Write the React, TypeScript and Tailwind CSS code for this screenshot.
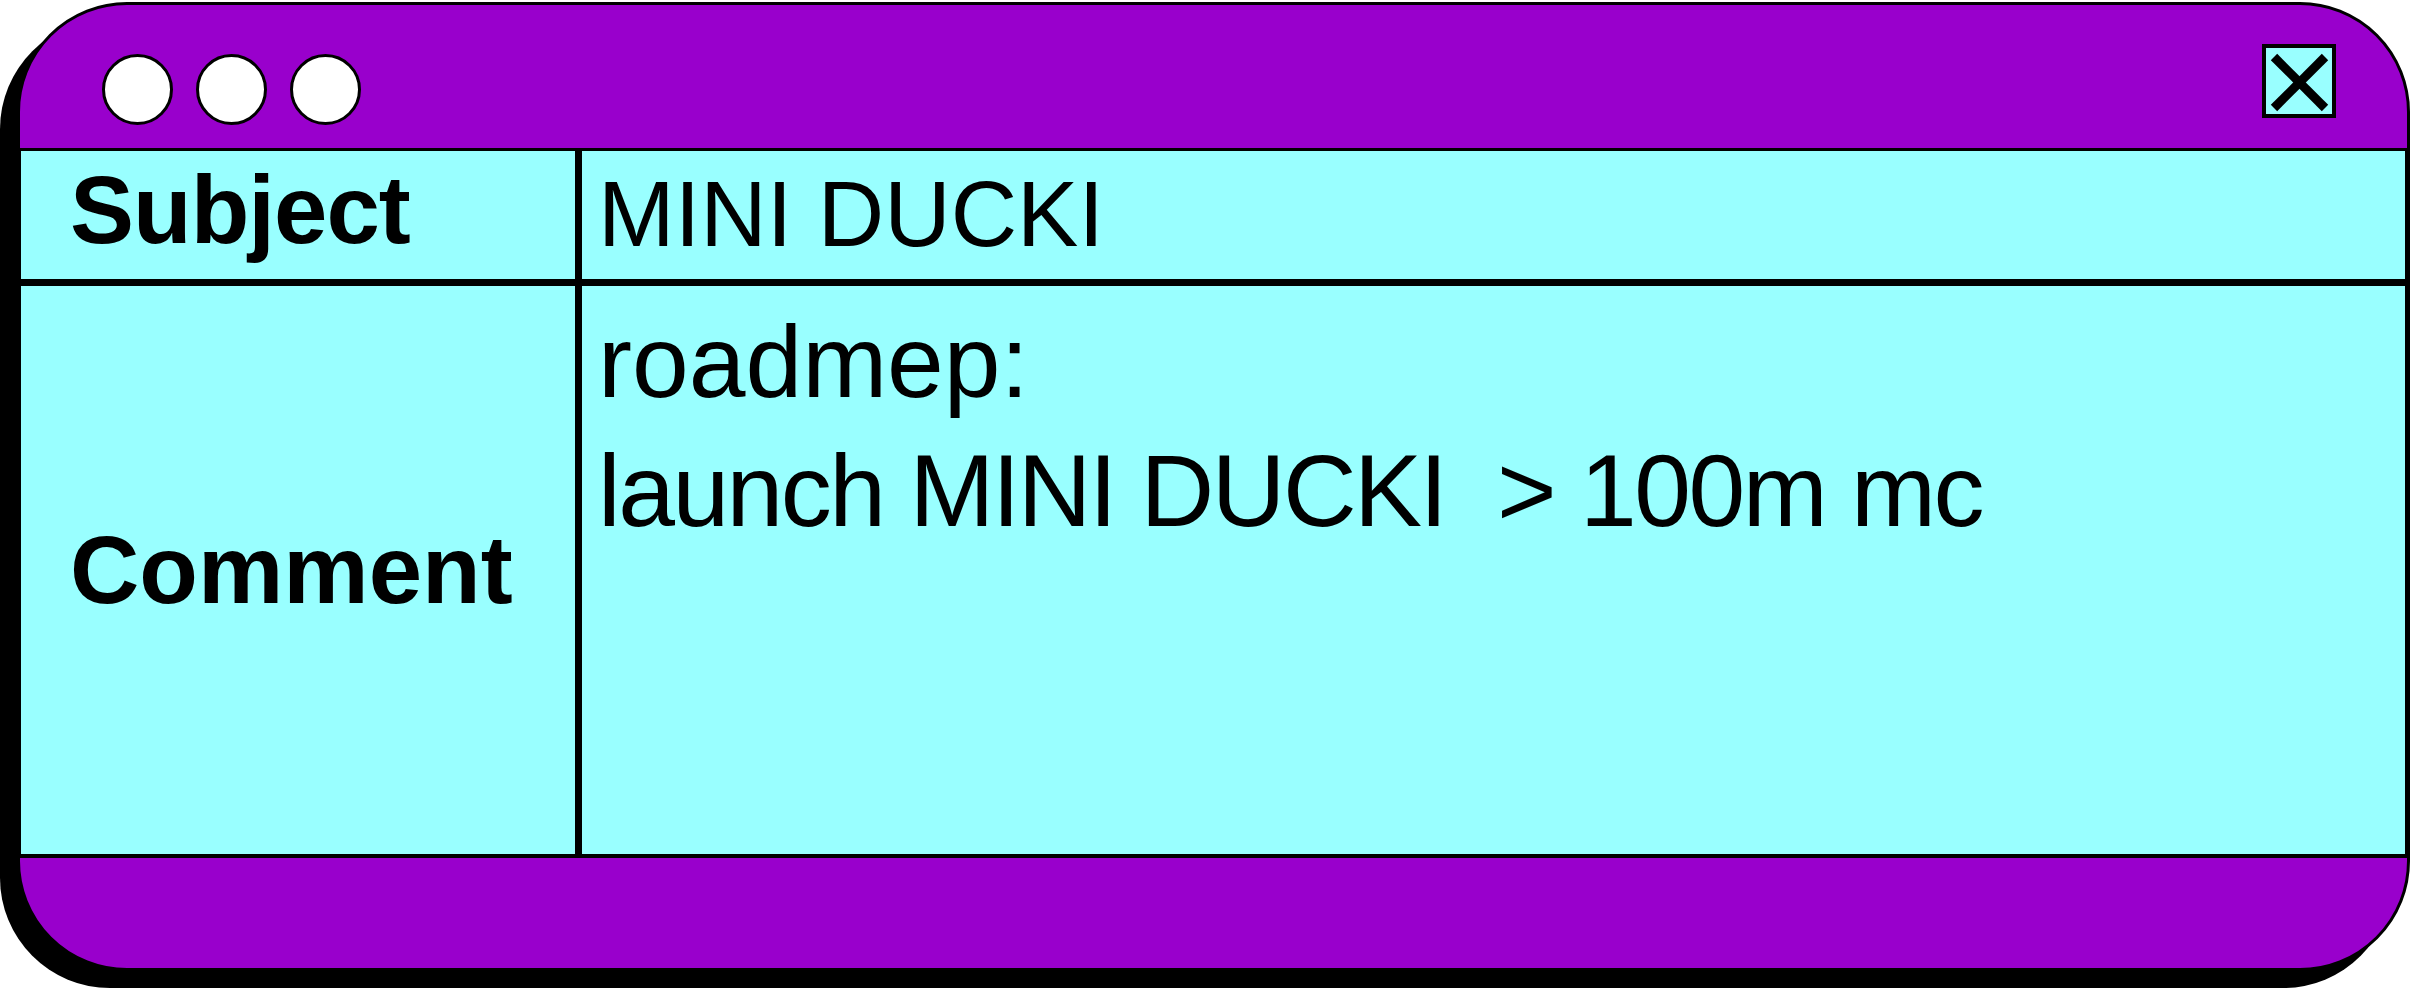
const PURPLE = 'bg-[#9900cc]';

function CloseIcon() {
  return (
    <svg width="66" height="66" viewBox="0 0 66 66" fill="none">
      <line x1="8" y1="9" x2="59" y2="60" stroke="#000" strokeWidth="9" strokeLinecap="butt" />
      <line x1="59" y1="9" x2="8" y2="60" stroke="#000" strokeWidth="9" strokeLinecap="butt" />
    </svg>
  );
}

export default function App() {
  return (
    <div className="w-[2412px] h-[988px] bg-white overflow-hidden font-['Liberation_Sans',Arial,sans-serif] text-black">
      <div
        className={`mt-[2px] ml-[17px] w-[2393px] h-[969px] rounded-[110px] border-[3px] border-black ${PURPLE} shadow-[-17px_17px_0_0_#000] overflow-hidden flex flex-col`}
      >
        {/* Title bar */}
        <div className="h-[146px] shrink-0 border-b-[3px] border-black flex items-start justify-between">
          <div className="flex gap-[23px] pl-[82px] pt-[49px]">
            <span className="w-[71px] h-[71px] rounded-full border-[3px] border-black bg-white" />
            <span className="w-[71px] h-[71px] rounded-full border-[3px] border-black bg-white" />
            <span className="w-[71px] h-[71px] rounded-full border-[3px] border-black bg-white" />
          </div>
          <button className="mt-[39px] mr-[71px] w-[74px] h-[74px] border-4 border-black bg-[#99ffff] flex items-center justify-center">
            <CloseIcon />
          </button>
        </div>

        {/* Table */}
        <div className="shrink-0 grid grid-cols-[554px_1fr] grid-rows-[128px_568px] gap-[7px] bg-black border-l border-r-2 border-b-4 border-black">
          <div className="bg-[#99ffff] pl-[49px] pt-[11px] text-[96px] font-bold leading-none tracking-[-1px]">Subject</div>
          <div className="bg-[#99ffff] pl-[16px] pt-[17px] text-[92px] leading-none">MINI DUCKI</div>
          <div className="bg-[#99ffff] pl-[49px] flex items-center text-[96px] font-bold leading-none">Comment</div>
          <div className="bg-[#99ffff] pl-[16px] pt-[12px] text-[102px] leading-[129px] whitespace-pre">
            <p>roadmep:</p>
            <p className="tracking-[-2.5px]">launch MINI DUCKI  &gt; 100m mc</p>
          </div>
        </div>

        {/* Bottom bar */}
        <div className="flex-1" />
      </div>
    </div>
  );
}
